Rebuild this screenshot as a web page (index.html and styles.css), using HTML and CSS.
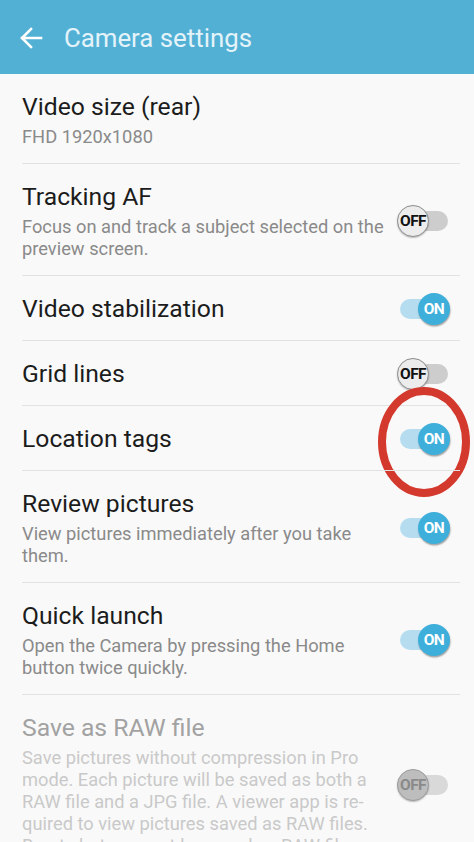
FILE: index.html
```
<!DOCTYPE html>
<html>
<head>
<meta charset="utf-8">
<link rel="stylesheet" href="styles.css">
</head>
<body>
<div class="app">
  <header class="bar">
    <svg class="back" width="24" height="24" viewBox="0 0 24 24"><path d="M22 12H3M12 3l-9 9 9 9" fill="none" stroke="#ffffff" stroke-width="2.6" stroke-linecap="square"/></svg>
    <span class="bar-title">Camera settings</span>
  </header>
  <div class="list">
    <div class="row first">
      <div class="text">
        <div class="title">Video size (rear)</div>
        <div class="sub">FHD 1920x1080</div>
      </div>
    </div>
    <div class="row">
      <div class="text">
        <div class="title">Tracking AF</div>
        <div class="sub">Focus on and track a subject selected on the preview screen.</div>
      </div>
      <div class="toggle off"><div class="knob">OFF</div></div>
    </div>
    <div class="row">
      <div class="text"><div class="title">Video stabilization</div></div>
      <div class="toggle on"><div class="knob">ON</div></div>
    </div>
    <div class="row">
      <div class="text"><div class="title">Grid lines</div></div>
      <div class="toggle off"><div class="knob">OFF</div></div>
    </div>
    <div class="row marked">
      <div class="text"><div class="title">Location tags</div></div>
      <div class="toggle on"><div class="knob">ON</div></div>
      <svg class="circle" width="100" height="120" viewBox="0 0 100 120"><ellipse cx="50" cy="60" rx="42" ry="51" fill="none" stroke="#d4392e" stroke-width="8"/></svg>
    </div>
    <div class="row">
      <div class="text">
        <div class="title">Review pictures</div>
        <div class="sub">View pictures immediately after you take them.</div>
      </div>
      <div class="toggle on"><div class="knob">ON</div></div>
    </div>
    <div class="row">
      <div class="text">
        <div class="title">Quick launch</div>
        <div class="sub">Open the Camera by pressing the Home button twice quickly.</div>
      </div>
      <div class="toggle on"><div class="knob">ON</div></div>
    </div>
    <div class="row disabled">
      <div class="text">
        <div class="title">Save as RAW file</div>
        <div class="sub">Save pictures without compression in Pro<br>mode. Each picture will be saved as both a<br>RAW file and a JPG file. A viewer app is re-<br>quired to view pictures saved as RAW files.<br>Burst shots cannot be saved as RAW files.</div>
      </div>
      <div class="toggle off"><div class="knob">OFF</div></div>
    </div>
  </div>
</div>
</body>
</html>
```
FILE: styles.css
```
html, body {
  margin: 0;
  padding: 0;
}
body {
  background: #f9f9f9;
  font-family: Roboto, "Noto Sans", sans-serif;
  width: 474px;
  height: 842px;
  overflow: hidden;
}
.app {
  display: flex;
  flex-direction: column;
}
.bar {
  height: 74px;
  background: #52b0d5;
  display: flex;
  align-items: center;
  padding-left: 19px;
  box-sizing: border-box;
}
.back {
  margin-top: 2px;
}
.bar-title {
  margin-left: 21px;
  font-size: 25.8px;
  color: #e4f3f9;
  margin-top: 2px;
}
.list {
  display: flex;
  flex-direction: column;
}
.row {
  display: flex;
  align-items: center;
  margin: 0 14px 0 22px;
  padding: 16px 12px 14px 0;
  border-top: 1px solid #e2e2e2;
  position: relative;
}
.row.first {
  border-top: none;
}
.text {
  flex: 1;
  min-width: 0;
}
.title {
  font-size: 24.7px;
  line-height: 34px;
  color: #1c1c1c;
}
.sub {
  font-size: 18.3px;
  line-height: 22px;
  color: #8a8a8a;
  margin-top: 2px;
  padding-bottom: 1px;
  padding-right: 4px;
}
.disabled .title {
  color: #a2a2a2;
}
.disabled .sub {
  color: #c9c9c9;
  white-space: nowrap;
}
.toggle {
  width: 48px;
  height: 20px;
  border-radius: 10px;
  display: flex;
  align-items: center;
  flex-shrink: 0;
  margin-left: 6px;
}
.knob {
  width: 32px;
  height: 32px;
  border-radius: 50%;
  box-sizing: border-box;
  display: flex;
  align-items: center;
  justify-content: center;
  font-size: 15.5px;
  font-weight: 700;
  letter-spacing: -0.6px;
}
.toggle.on {
  background: #b5ddef;
  justify-content: flex-end;
}
.toggle.on .knob {
  background: #3eafdb;
  color: #ffffff;
  margin-right: -2px;
  box-shadow: 0.5px 1.5px 1.5px rgba(0, 0, 0, 0.35);
}
.toggle.off {
  background: #cdcdcd;
  justify-content: flex-start;
}
.toggle.off .knob {
  background: #ececec;
  color: #111111;
  border: 1px solid #8e8e8e;
  margin-left: -3px;
  box-shadow: 0 1px 1.5px rgba(0, 0, 0, 0.25);
}
.disabled .toggle.off {
  background: #d9d9d9;
}
.disabled .toggle.off .knob {
  background: #bdbdbd;
  color: #8a8a8a;
  border-color: #9d9d9d;
}
.circle {
  position: absolute;
  left: 352px;
  top: -24px;
}
```
